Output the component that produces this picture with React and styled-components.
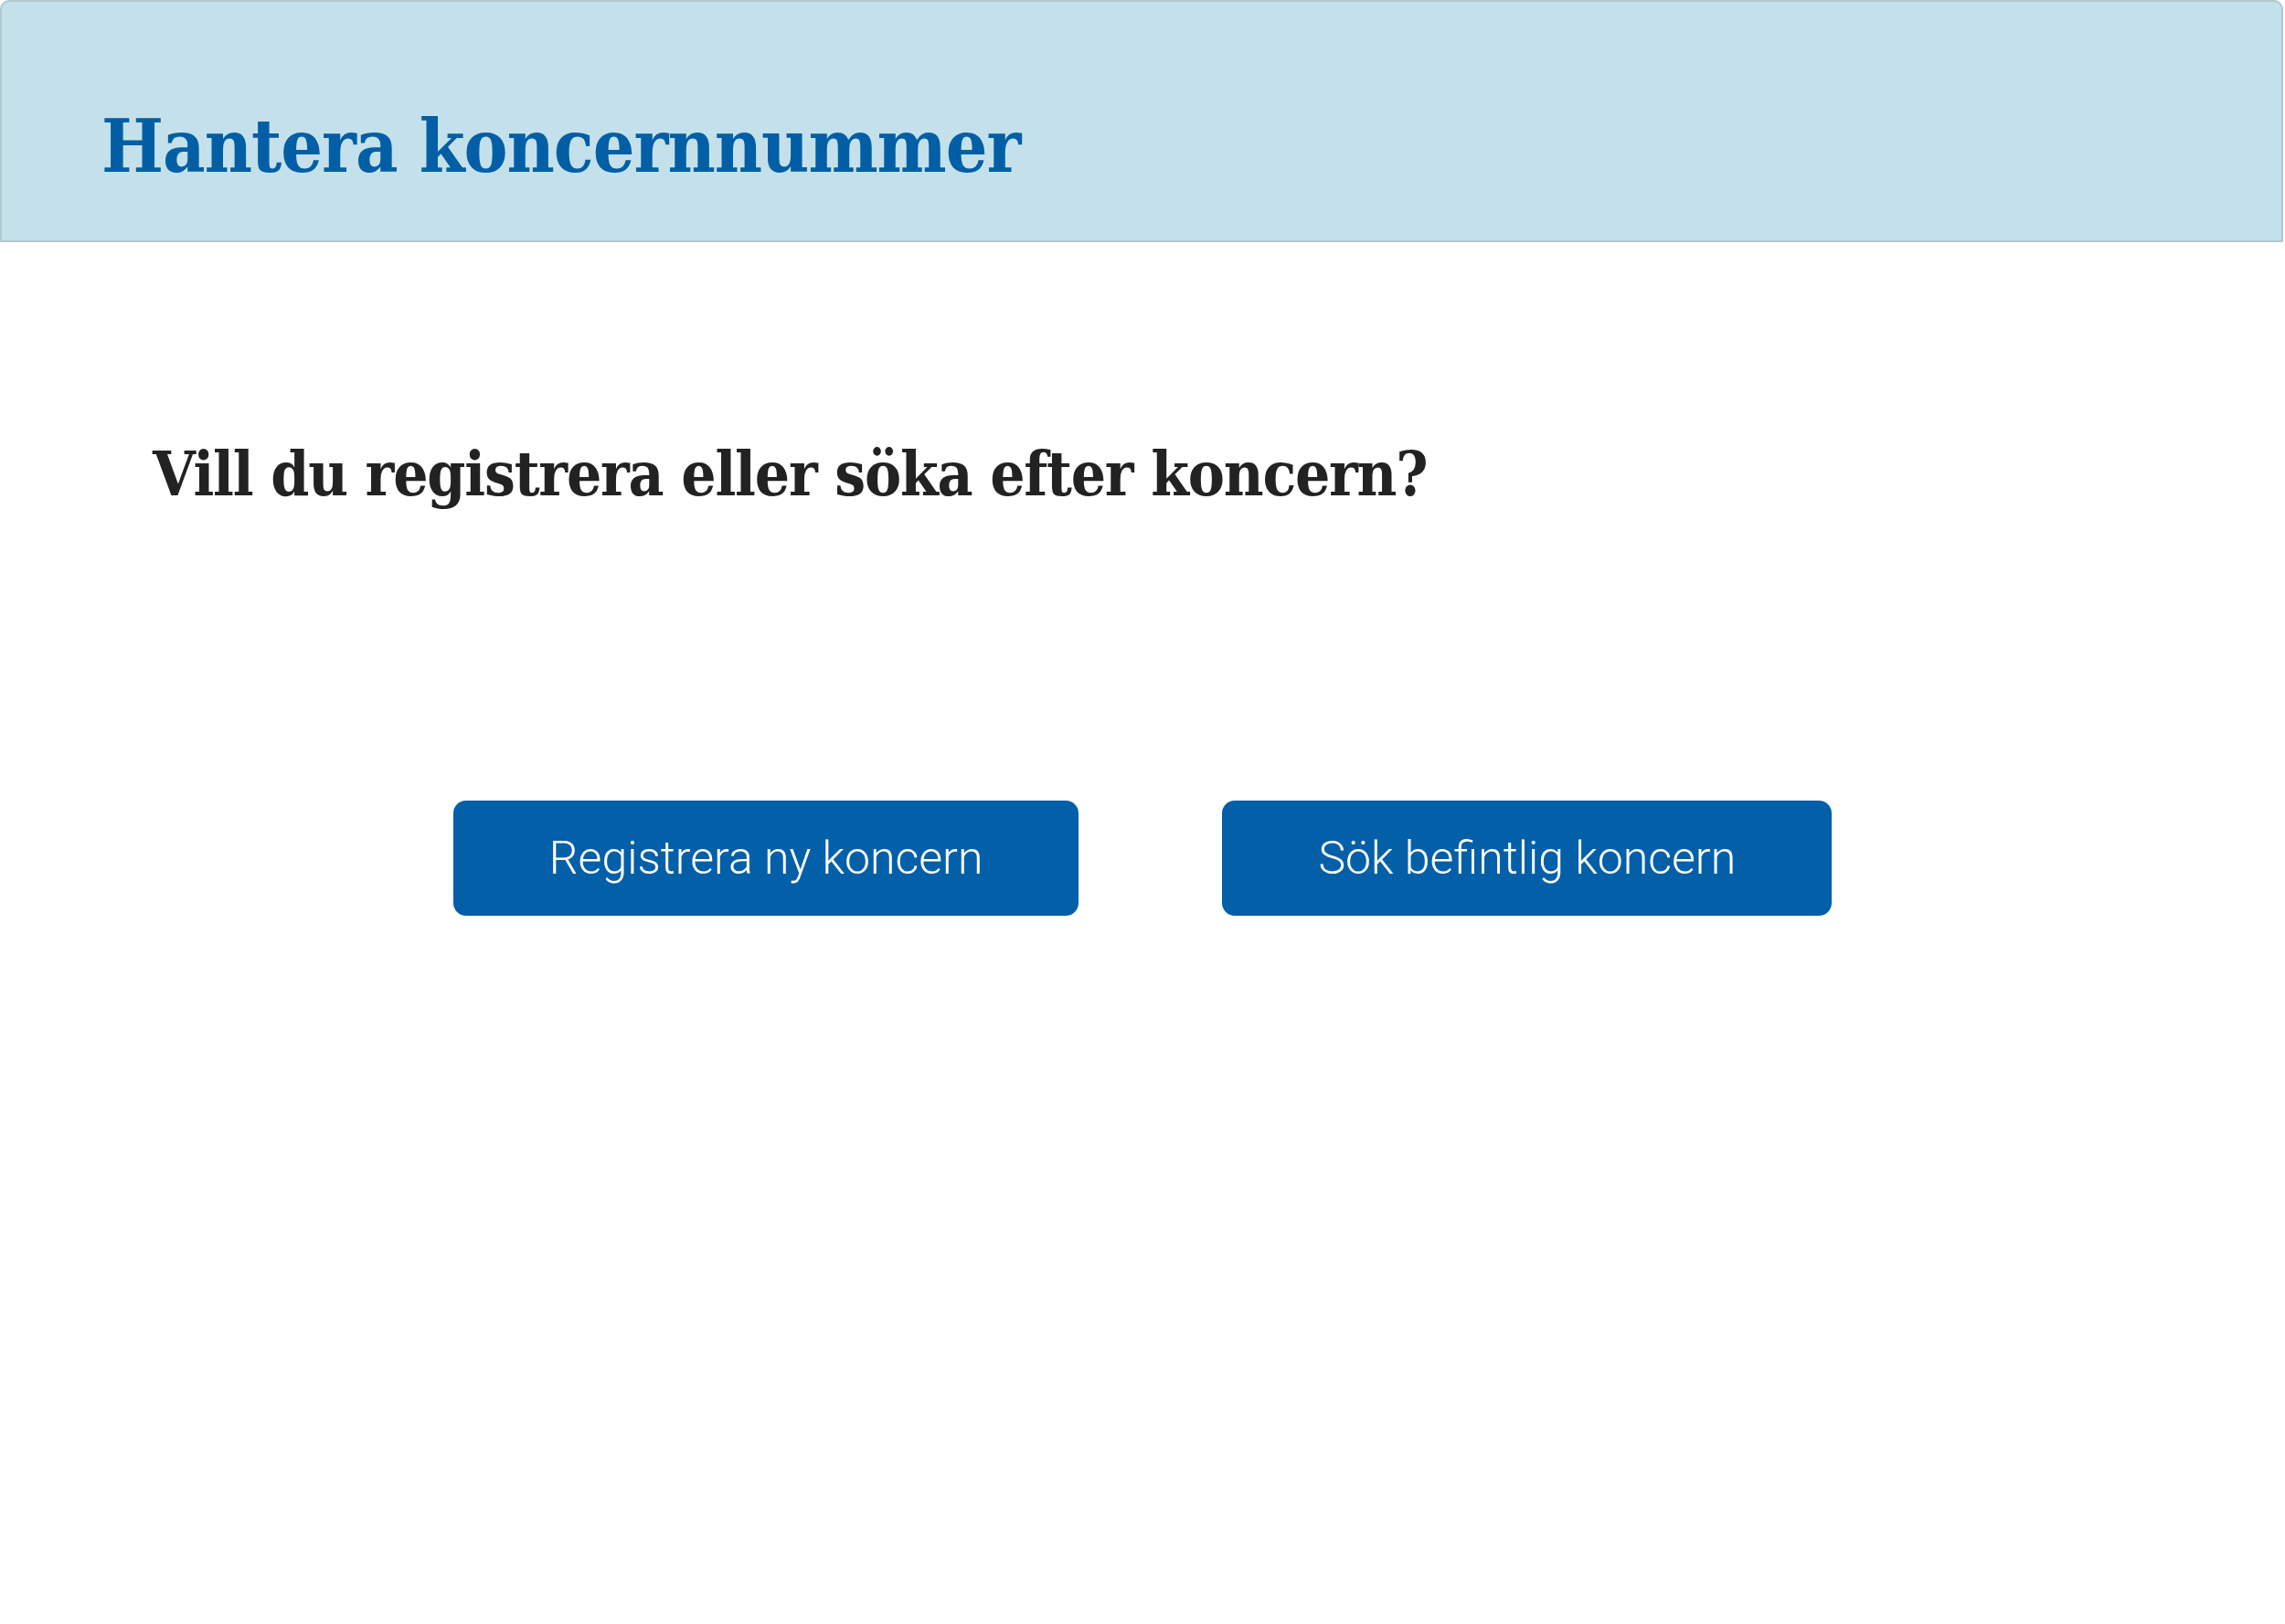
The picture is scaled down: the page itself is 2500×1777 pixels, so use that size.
import React from 'react';
import styled, {createGlobalStyle} from 'styled-components';

const GlobalStyle = createGlobalStyle`
    html, body {
      margin: 0;
      padding: 0;
      background: #FFFFFF;
    }
`

const Page = styled.div`
    width: 2500px;
    min-height: 1777px;
    background: #FFFFFF;
`

const Header = styled.header`
    box-sizing: border-box;
    height: 265px;
    margin-right: 2px;
    padding: 118px 0 0 109px;
    background: #C4E1EB;
    border: 2px solid #B3C7CF;
    border-radius: 10px 10px 0 0;
`

const Title = styled.h1`
    margin: 0;
    font-family: "DejaVu Serif", serif;
    font-stretch: condensed;
    font-weight: 700;
    font-size: 80px;
    letter-spacing: -1px;
    line-height: 1;
    color: #025FA6;
`

const Content = styled.main`
    padding: 220px 0 0 167px;
`

const Question = styled.h2`
    margin: 0;
    font-family: "DejaVu Serif", serif;
    font-stretch: condensed;
    font-weight: 700;
    font-size: 67px;
    letter-spacing: -1.2px;
    line-height: 1;
    color: #222222;
`

const Actions = styled.div`
    display: flex;
    justify-content: center;
    gap: 157px;
    margin: 324px 0 0 -167px;
`

const Button = styled.button`
    height: 126px;
    padding: 0 105px;
    border: none;
    border-radius: 14px;
    background: #025FA8;
    color: #FFFFFF;
    font-family: Roboto, "Liberation Sans", sans-serif;
    font-weight: 300;
    font-size: 50px;
    cursor: pointer;
`

export default function App() {
    return (
        <Page>
            <GlobalStyle/>
            <Header>
                <Title>Hantera koncernnummer</Title>
            </Header>
            <Content>
                <Question>Vill du registrera eller söka efter koncern?</Question>
                <Actions>
                    <Button>Registrera ny koncern</Button>
                    <Button>Sök befintlig koncern</Button>
                </Actions>
            </Content>
        </Page>
    );
}
